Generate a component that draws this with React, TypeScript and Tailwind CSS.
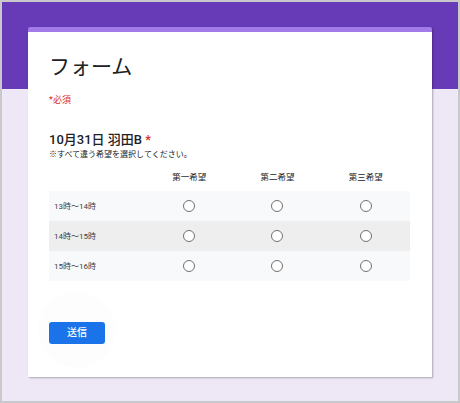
import React from "react";

const rows = ["13時〜14時", "14時〜15時", "15時〜16時"];
const cols = ["第一希望", "第二希望", "第三希望"];

function Radio() {
  return <div className="w-[12px] h-[12px] rounded-full border-[1.5px] border-[#707070] bg-white" />;
}

export default function App() {
  return (
    <div className="w-[460px] h-[403px] bg-[#c9c9cc] p-[2px] font-[Roboto,'Noto_Sans_CJK_JP',sans-serif]">
      <div className="w-full h-full bg-[linear-gradient(to_bottom,#673ab7_87px,#ede7f6_87px)] pl-[26px] pt-[25px]">
        <div className="relative w-[404px] h-[350px] bg-white border-t-[5px] border-[#a27be8] rounded-t-[2px] shadow-[1px_1px_2px_rgba(0,0,0,0.28)] pl-[21px] pr-[22px] pt-[20px]">
          <div className="text-[21px] leading-[30px] text-[#202124] font-normal">フォーム</div>
          <div className="mt-[12px] text-[9px] leading-[12px] text-[#d93025]">*必須</div>
          <div className="mt-[25px] text-[13px] leading-[18px] font-medium text-[#202124]">
            10月31日 羽田B <span className="text-[#d93025]">*</span>
          </div>
          <div className="text-[8px] leading-[11px] text-[#202124]">※すべて違う希望を選択してください。</div>
          <div className="grid grid-cols-[96px_1fr_1fr_1fr] mt-[9px] h-[22px] items-end pb-[8px]">
            <div />
            {cols.map((c) => (
              <div key={c} className="text-center text-[8.5px] leading-[11px] text-[#202124]">{c}</div>
            ))}
          </div>
          <div className="flex flex-col">
            {rows.map((r, i) => (
              <div
                key={r}
                className={`grid grid-cols-[96px_1fr_1fr_1fr] h-[30px] items-center ${i === 1 ? "bg-[#eeeeee]" : "bg-[#f8f9fa]"}`}
              >
                <div className="pl-[5px] text-[8px] leading-[11px] text-[#3c4043]">{r}</div>
                {cols.map((c) => (
                  <div key={c} className="flex justify-center">
                    <Radio />
                  </div>
                ))}
              </div>
            ))}
          </div>
          <div className="relative mt-[38px] w-[56px] h-[22px]">
            <div className="absolute left-[-11px] top-[-27px] w-[78px] h-[76px] rounded-full bg-[rgba(0,0,0,0.008)]" />
            <button className="relative w-[56px] h-[22px] rounded-[3px] bg-[#1a73e8] text-white text-[10px] leading-[22px] font-medium">
              送信
            </button>
          </div>
        </div>
      </div>
    </div>
  );
}
